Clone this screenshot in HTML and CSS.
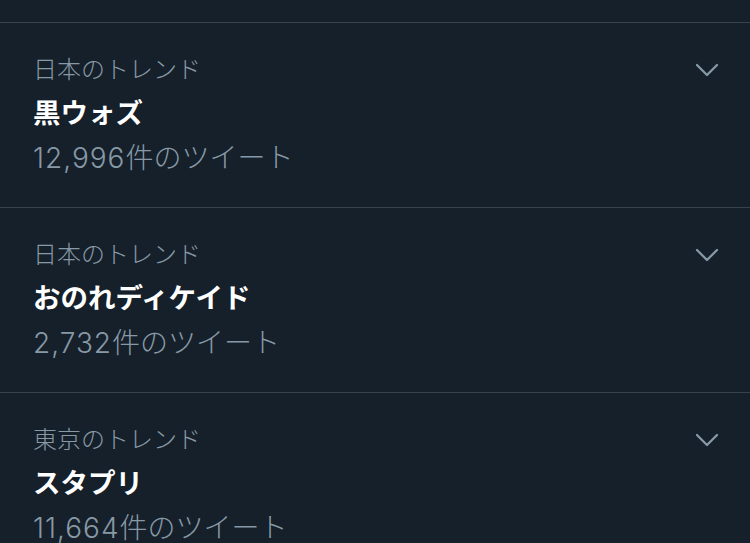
FILE: index.html
```html
<!DOCTYPE html>
<html lang="ja">
<head>
<meta charset="utf-8">
<link rel="stylesheet" href="styles.css">
</head>
<body>
<div class="list">
  <div class="top"></div>
  <div class="trend">
    <div class="info">
      <div class="label">日本のトレンド</div>
      <div class="title">黒ウォズ</div>
      <div class="count"><span class="num">12,996</span>件のツイート</div>
    </div>
    <svg class="chev" width="24" height="14" viewBox="0 0 24 14"><path d="M2 2 L12 12 L22 2" fill="none" stroke="#8899A6" stroke-width="2.3" stroke-linecap="round" stroke-linejoin="round"/></svg>
  </div>
  <div class="trend">
    <div class="info">
      <div class="label">日本のトレンド</div>
      <div class="title">おのれディケイド</div>
      <div class="count"><span class="num">2,732</span>件のツイート</div>
    </div>
    <svg class="chev" width="24" height="14" viewBox="0 0 24 14"><path d="M2 2 L12 12 L22 2" fill="none" stroke="#8899A6" stroke-width="2.3" stroke-linecap="round" stroke-linejoin="round"/></svg>
  </div>
  <div class="trend">
    <div class="info">
      <div class="label">東京のトレンド</div>
      <div class="title">スタプリ</div>
      <div class="count"><span class="num">11,664</span>件のツイート</div>
    </div>
    <svg class="chev" width="24" height="14" viewBox="0 0 24 14"><path d="M2 2 L12 12 L22 2" fill="none" stroke="#8899A6" stroke-width="2.3" stroke-linecap="round" stroke-linejoin="round"/></svg>
  </div>
</div>
</body>
</html>
```
FILE: styles.css
```css
html, body {
  margin: 0;
  padding: 0;
  background: #15202B;
  height: 100%;
  overflow: hidden;
}
body {
  font-family: Inter, "Noto Sans CJK JP", sans-serif;
}
.top {
  height: 22px;
  border-bottom: 1px solid #38444D;
}
.trend {
  height: 159px;
  border-bottom: 1px solid #38444D;
  display: flex;
  justify-content: space-between;
  align-items: flex-start;
  padding: 25px 31px 0 33px;
}
.label {
  color: #8899A6;
  font-size: 24px;
  font-weight: 300;
  line-height: 44px;
}
.title {
  color: #FFFFFF;
  font-size: 27.5px;
  font-weight: 700;
  line-height: 42px;
}
.count {
  color: #8899A6;
  font-size: 28px;
  font-weight: 300;
  line-height: 48px;
}
.num {
  letter-spacing: 1px;
}
.chev {
  margin-top: 15px;
}
```
